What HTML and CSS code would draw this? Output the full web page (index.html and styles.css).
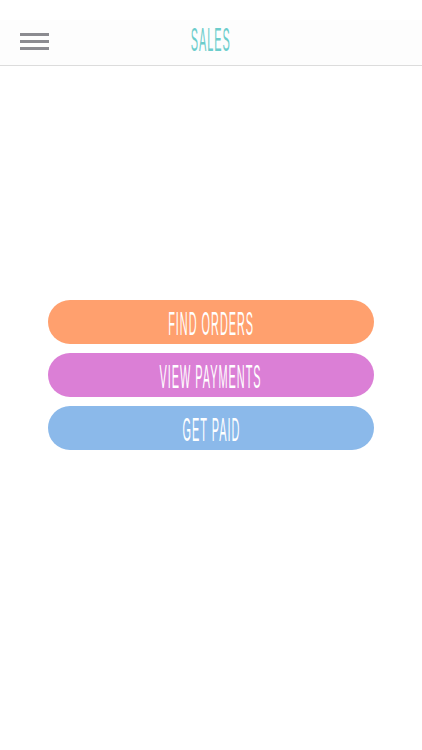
FILE: index.html
```html
<!DOCTYPE html>
<html>
<head>
<meta charset="utf-8">
<link rel="stylesheet" href="styles.css">
</head>
<body>
<div class="status"></div>
<header class="topbar">
  <button class="menu" aria-label="Menu">
    <span></span><span></span><span></span>
  </button>
  <h1 class="title"><span class="cond">SALES</span></h1>
</header>
<main class="actions">
  <a class="btn orange"><span class="cond">FIND ORDERS</span></a>
  <a class="btn purple"><span class="cond">VIEW PAYMENTS</span></a>
  <a class="btn blue"><span class="cond">GET PAID</span></a>
</main>
</body>
</html>
```
FILE: styles.css
```css
html, body {
  margin: 0;
  padding: 0;
  background: #ffffff;
  font-family: "Liberation Sans", Arial, sans-serif;
}
.status {
  height: 20px;
  background: #ffffff;
}
.topbar {
  height: 45px;
  background: #fdfdfd;
  border-bottom: 1px solid #dcdcdc;
  display: flex;
  align-items: center;
  justify-content: center;
  position: relative;
}
.menu {
  position: absolute;
  left: 20px;
  top: 13px;
  width: 29px;
  padding: 0;
  border: 0;
  background: none;
  display: flex;
  flex-direction: column;
  gap: 4.3px;
}
.menu span {
  display: block;
  height: 2.8px;
  background: #8b8b90;
}
.title {
  margin: 0 0 6px 0;
  font-weight: normal;
  font-size: 33px;
  line-height: 1;
  color: #6ccdcc;
}
.cond {
  display: inline-block;
  transform: scaleX(0.33);
  letter-spacing: 3px;
  white-space: nowrap;
}
.actions {
  padding: 234px 48px 0 48px;
  display: flex;
  flex-direction: column;
  gap: 9px;
}
.btn {
  height: 44px;
  border-radius: 22px;
  display: flex;
  align-items: center;
  justify-content: center;
  color: #ffffff;
  font-size: 33px;
  line-height: 1;
  overflow: hidden;
}
.btn .cond {
  margin-top: 2px;
}
.orange { background: #ffa06e; }
.purple { background: #db7fd6; }
.blue { background: #8bb9ea; }
```
